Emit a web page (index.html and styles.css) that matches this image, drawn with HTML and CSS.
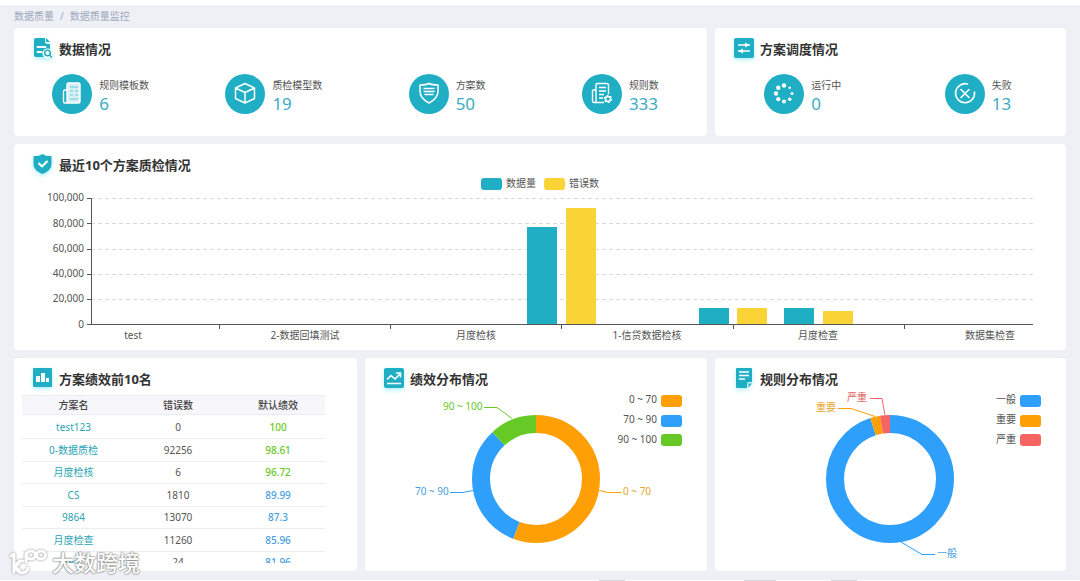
FILE: index.html
```html
<!DOCTYPE html>
<html lang="zh-CN">
  <head>
    <meta charset="UTF-8" />
    <meta name="viewport" content="width=device-width, initial-scale=1.0" />
    <title>数据质量监控</title>
    <link rel="stylesheet" href="styles.css">
  </head>
  <body>
    <nav class="breadcrumb">
      <a href="#">数据质量</a>
      <span>/</span>
      <a href="#">数据质量监控</a>
    </nav>

    <main class="dashboard">
      <!-- 数据情况 -->
      <section class="card card-double">
        <h2 class="card-title">
          <svg class="title-icon" viewBox="0 0 20 20">
            <path fill="#20aec5" d="M3 0h9v4a2 2 0 0 0 2 2h3v13H3a2 2 0 0 1-2-2V2a2 2 0 0 1 2-2z" />
            <path fill="#20aec5" d="M13 0l4 4h-3a1 1 0 0 1-1-1z" />
            <path stroke="#fff" stroke-width="1.800" stroke-linecap="round" d="M4.500 9h8M4.500 14h4" />
            <circle cx="14.500" cy="15.500" r="5" fill="#fff" />
            <circle cx="14.500" cy="15" r="2.800" fill="#fff" stroke="#20aec5" stroke-width="1.500" />
            <path stroke="#20aec5" stroke-width="1.600" stroke-linecap="round" d="M16.600 17.200l1.800 1.800" />
          </svg>
          数据情况
        </h2>
        <div class="stats">
          <div class="stat">
            <svg class="stat-icon" viewBox="0 0 40 40">
              <circle cx="20" cy="20" r="20" fill="#20aec5" />
              <rect x="15" y="9" width="13" height="20" rx="1.500" fill="#d5f0f5" stroke="#fff" stroke-width="1.400" />
              <path fill="none" stroke="#fff" stroke-width="1.400" d="M15 16h-2a1.500 1.500 0 0 0-1.500 1.500v10A1.500 1.500 0 0 0 13 29h3" />
              <path stroke="#20aec5" stroke-width=".6" d="M18 13h8M18 17h3M23 17h3M18 21h3M23 21h3M18 25h8" />
            </svg>
            <div class="stat-text">
              <div class="stat-label">规则模板数</div>
              <div class="stat-value">6</div>
            </div>
          </div>
          <div class="stat">
            <svg class="stat-icon" viewBox="0 0 40 40">
              <circle cx="20" cy="20" r="20" fill="#20aec5" />
              <path fill="none" stroke="#fff" stroke-width="1.500" stroke-linejoin="round" d="M20 9.500l9.500 4.500v10.500L20 29l-9.500-4.500V14zM10.500 14l9.500 4.500 9.500-4.500M20 18.500V29" />
            </svg>
            <div class="stat-text">
              <div class="stat-label">质检模型数</div>
              <div class="stat-value">19</div>
            </div>
          </div>
          <div class="stat">
            <svg class="stat-icon" viewBox="0 0 40 40">
              <circle cx="20" cy="20" r="20" fill="#20aec5" />
              <path fill="none" stroke="#fff" stroke-width="1.500" stroke-linejoin="round" d="M20 9.500c3 1.500 6 1.500 9 1.500v6c0 5.500-4 9.500-9 12-5-2.500-9-6.500-9-12v-6c3 0 6 0 9-1.500z" />
              <path stroke="#fff" stroke-width="1.500" d="M14.500 14.500h11M14.500 17.500h11M15.500 20.500h9" />
            </svg>
            <div class="stat-text">
              <div class="stat-label">方案数</div>
              <div class="stat-value">50</div>
            </div>
          </div>
          <div class="stat">
            <svg class="stat-icon" viewBox="0 0 40 40">
              <circle cx="20" cy="20" r="20" fill="#20aec5" />
              <path fill="none" stroke="#fff" stroke-width="1.400" stroke-linejoin="round" d="M26.500 20V11a1.500 1.500 0 0 0-1.500-1.500H15.500A1.500 1.500 0 0 0 14 11v17.500h8M14 16h-2.500a1 1 0 0 0-1 1v10a1.500 1.500 0 0 0 1.500 1.500h3" />
              <path stroke="#fff" stroke-width="1.400" d="M17 13.500h7M17 17h7M17 20.500h5M17 24h4" />
              <circle cx="26" cy="25" r="2.500" fill="none" stroke="#fff" stroke-width="1.500" />
              <circle cx="26" cy="25" r="3.600" fill="none" stroke="#fff" stroke-width="1.200" stroke-dasharray="1.900 1.870" />
            </svg>
            <div class="stat-text">
              <div class="stat-label">规则数</div>
              <div class="stat-value">333</div>
            </div>
          </div>
        </div>
      </section>

      <!-- 方案调度情况 -->
      <section class="card">
        <h2 class="card-title">
          <svg class="title-icon" viewBox="0 0 20 20">
            <rect width="20" height="20" rx="2" fill="#20aec5" />
            <path stroke="#fff" stroke-width="1.300" stroke-linecap="round" d="M4.500 7h11M4.500 13h11" />
            <path fill="#fff" d="M11 4.500L15.500 7 11 9.500zM9 10.500L4.500 13 9 15.500z" />
          </svg>
          方案调度情况
        </h2>
        <div class="stats">
          <div class="stat">
            <svg class="stat-icon" viewBox="0 0 40 40">
              <circle cx="20" cy="20" r="20" fill="#20aec5" />
              <g fill="#fff">
                <circle cx="20" cy="11.500" r="2.200" />
                <circle cx="14.300" cy="13.800" r="2.200" />
                <circle cx="12" cy="19.500" r="2.200" />
                <circle cx="14.300" cy="25.200" r="2.100" />
                <circle cx="20" cy="27.500" r="2" />
                <circle cx="25.700" cy="25.200" r="1.800" />
                <circle cx="28" cy="19.500" r="1.500" />
                <circle cx="25.700" cy="13.800" r="1.200" />
              </g>
            </svg>
            <div class="stat-text">
              <div class="stat-label">运行中</div>
              <div class="stat-value">0</div>
            </div>
          </div>
          <div class="stat">
            <svg class="stat-icon" viewBox="0 0 40 40">
              <circle cx="20" cy="20" r="20" fill="#20aec5" />
              <path fill="none" stroke="#fff" stroke-width="1.600" stroke-linecap="round" d="M22.500 10a9.500 9.500 0 1 0 7 8M16 15.500l8 8M24 15.500l-8 8" />
            </svg>
            <div class="stat-text">
              <div class="stat-label">失败</div>
              <div class="stat-value">13</div>
            </div>
          </div>
        </div>
      </section>

      <!-- 最近10个方案质检情况 -->
      <section class="card card-full">
        <h2 class="card-title">
          <svg class="title-icon" viewBox="0 0 20 20">
            <path fill="#20aec5" d="M9.500 0c3 2 6 2.200 9 2v8c0 5-4 8-9 10-5-2-9-5-9-10V2c3 .2 6 0 9-2z" />
            <path fill="none" stroke="#fff" stroke-width="2" stroke-linecap="round" stroke-linejoin="round" d="M6 9.500l3 3 5-5" />
          </svg>
          最近10个方案质检情况
        </h2>
        <svg class="chart" viewBox="0 0 1052 176">
          <rect x="467" y="4" width="21" height="12" rx="3" fill="#20aec5" />
          <text x="492" y="13">数据量</text>
          <rect x="530" y="4" width="21" height="12" rx="3" fill="#fad337" />
          <text x="555" y="13">错误数</text>

          <path class="grid-line" d="M77 24.500H1019M77 49.500H1019M77 75.500H1019M77 100.500H1019M77 125.500H1019" />

          <g fill="#20aec5">
            <rect x="513" y="53" width="30" height="98" />
            <rect x="685" y="134" width="30" height="17" />
            <rect x="770" y="134" width="30" height="17" />
          </g>
          <g fill="#fad337">
            <rect x="552" y="34" width="30" height="117" />
            <rect x="723" y="134" width="30" height="17" />
            <rect x="809" y="137" width="30" height="14" />
          </g>

          <path class="axis" d="M77.500 24V151M73 150.500H1019M73 24.500h4M73 49.500h4M73 75.500h4M73 100.500h4M73 125.500h4M205.500 151v4M376.500 151v4M547.500 151v4M719.500 151v4M890.500 151v4" />

          <g class="axis-y">
            <text x="70" y="27">100,000</text>
            <text x="70" y="53">80,000</text>
            <text x="70" y="78">60,000</text>
            <text x="70" y="103">40,000</text>
            <text x="70" y="128">20,000</text>
            <text x="70" y="154">0</text>
          </g>
          <g class="axis-x">
            <text x="119" y="165">test</text>
            <text x="291" y="165">2-数据回填测试</text>
            <text x="462" y="165">月度检核</text>
            <text x="633" y="165">1-信贷数据检核</text>
            <text x="804" y="165">月度检查</text>
            <text x="976" y="165">数据集检查</text>
          </g>
        </svg>
      </section>

      <!-- 方案绩效前10名 -->
      <section class="card">
        <h2 class="card-title">
          <svg class="title-icon" viewBox="0 0 20 20">
            <rect width="19" height="19" rx="1" fill="#20aec5" />
            <path fill="#fff" d="M3 8h4v6H3zM8 5h4v9H8zM13 10h3v4h-3z" />
          </svg>
          方案绩效前10名
        </h2>
        <div class="table-wrap">
          <table class="rank-table">
            <colgroup>
              <col class="col-name">
              <col class="col-errors">
              <col class="col-score">
            </colgroup>
            <thead>
              <tr><th>方案名</th><th>错误数</th><th>默认绩效</th></tr>
            </thead>
            <tbody>
              <tr><td><a href="#">test123</a></td><td>0</td><td class="score high">100</td></tr>
              <tr><td><a href="#">0-数据质检</a></td><td>92256</td><td class="score high">98.61</td></tr>
              <tr><td><a href="#">月度检核</a></td><td>6</td><td class="score high">96.72</td></tr>
              <tr><td><a href="#">CS</a></td><td>1810</td><td class="score">89.99</td></tr>
              <tr><td><a href="#">9864</a></td><td>13070</td><td class="score">87.3</td></tr>
              <tr><td><a href="#">月度检查</a></td><td>11260</td><td class="score">85.96</td></tr>
              <tr><td><a href="#">test</a></td><td>24</td><td class="score">81.96</td></tr>
            </tbody>
          </table>
        </div>
      </section>

      <!-- 绩效分布情况 -->
      <section class="card">
        <h2 class="card-title">
          <svg class="title-icon" viewBox="0 0 20 20">
            <rect width="20" height="20" rx="2" fill="#20aec5" />
            <path fill="none" stroke="#fff" stroke-width="1.600" d="M3 11.500l4-4 4 3.500 5-5M12 5h4.500v4.500M3 15.500h14" />
          </svg>
          绩效分布情况
        </h2>
        <svg class="chart" viewBox="0 0 342 183">
          <g class="ring" transform="rotate(-90 171 91)">
            <circle cx="171" cy="91" r="55" pathLength="360" stroke="#ff9f06" stroke-dasharray="201 159" />
            <circle cx="171" cy="91" r="55" pathLength="360" stroke="#2e9ffb" stroke-dasharray="116 244" stroke-dashoffset="-201" />
            <circle cx="171" cy="91" r="55" pathLength="360" stroke="#67c926" stroke-dasharray="43 317" stroke-dashoffset="-317" />
          </g>
          <g class="leader">
            <path stroke="#67c926" d="M119 19.500h13l15 11" />
            <path stroke="#2e9ffb" d="M85 104.500h13l10-2" />
            <path stroke="#ff9f06" d="M234 102.500l9 2h13" />
          </g>
          <text x="78" y="22" fill="#67c926">90 ~ 100</text>
          <text x="50" y="107" fill="#4a9fe0">70 ~ 90</text>
          <text x="258" y="107" fill="#e8a62e">0 ~ 70</text>
          <g class="legend">
            <text x="292" y="15">0 ~ 70</text>
            <text x="292" y="35">70 ~ 90</text>
            <text x="292" y="55">90 ~ 100</text>
          </g>
          <rect x="296" y="7" width="21" height="12" rx="3" fill="#ff9f06" />
          <rect x="296" y="27" width="21" height="12" rx="3" fill="#2e9ffb" />
          <rect x="296" y="46" width="21" height="12" rx="3" fill="#67c926" />
        </svg>
      </section>

      <!-- 规则分布情况 -->
      <section class="card">
        <h2 class="card-title">
          <svg class="title-icon" viewBox="0 0 20 20">
            <path fill="#20aec5" d="M3 0h14a1 1 0 0 1 1 1v13h-3a2 2 0 0 0-2 2v4H3a1 1 0 0 1-1-1V1a1 1 0 0 1 1-1z" />
            <path fill="#20aec5" d="M14.500 15.500H18L14.500 19.500z" />
            <path stroke="#fff" stroke-width="1.500" d="M5 4h10M5 7.500h10M5 11h6" />
          </svg>
          规则分布情况
        </h2>
        <svg class="chart" viewBox="0 0 351 183">
          <g class="ring" transform="rotate(-90 175 91)">
            <circle cx="175" cy="91" r="55" pathLength="360" stroke="#2e9ffb" stroke-dasharray="342 18" />
            <circle cx="175" cy="91" r="55" pathLength="360" stroke="#ff9f06" stroke-dasharray="9 351" stroke-dashoffset="-342" />
            <circle cx="175" cy="91" r="55" pathLength="360" stroke="#f56463" stroke-dasharray="9 351" stroke-dashoffset="-351" />
          </g>
          <g class="leader">
            <path stroke="#f56463" d="M155 10.500h12l3 17" />
            <path stroke="#ff9f06" d="M123 20.500h13l24 8" />
            <path stroke="#2e9ffb" d="M186 154l21 12.500h13" />
          </g>
          <text x="132" y="13" fill="#e06464">严重</text>
          <text x="101" y="23" fill="#e8a62e">重要</text>
          <text x="222" y="169" fill="#4a9fe0">一般</text>
          <g class="legend">
            <text x="301" y="15">一般</text>
            <text x="301" y="35">重要</text>
            <text x="301" y="55">严重</text>
          </g>
          <rect x="305" y="7" width="21" height="12" rx="3" fill="#2e9ffb" />
          <rect x="305" y="27" width="21" height="12" rx="3" fill="#ff9f06" />
          <rect x="305" y="46" width="21" height="12" rx="3" fill="#f56463" />
        </svg>
      </section>
    </main>

    <svg class="bottom-strip" viewBox="0 0 1080 4">
      <path fill="#d5d7de" d="M599 0h26v1h-26zM744 0h32v1h-32zM831 0h26v1h-26z" />
    </svg>

    <!-- 水印 -->
    <div class="watermark">
      <svg class="watermark-logo" viewBox="0 0 40 28">
        <g fill="none" stroke="#fff" stroke-width="3" stroke-linecap="round" stroke-linejoin="round">
          <path d="M3 8l3-2v18M11 15l-4 4 4 3M20 20a6 6 0 1 1-5-7" />
          <path d="M18 14V6" />
          <ellipse cx="23" cy="7" rx="4.500" ry="4" />
          <ellipse cx="33" cy="7" rx="4.500" ry="4" />
        </g>
      </svg>
      <span>大数跨境</span>
    </div>
  </body>
</html>
```
FILE: styles.css
```css
* {
  margin: 0;
  padding: 0;
  box-sizing: border-box;
}

body {
  position: relative;
  min-height: 100vh;
  overflow: hidden;
  border-top: 5px solid #fff;
  background: #eff0f5;
  font-family: "Noto Sans", "Noto Sans CJK SC", sans-serif;
  font-size: 10px;
  color: #555;
}

a {
  color: inherit;
  text-decoration: none;
}

.breadcrumb {
  display: flex;
  gap: 6px;
  padding: 0 14px;
  line-height: 23px;
  color: #9da9bd;
}

.dashboard {
  display: grid;
  grid-template-columns: 343fr 342fr 351fr;
  gap: 8px;
  padding: 0 14px;
}

.card {
  min-width: 0;
  padding-top: 10px;
  background: #fff;
  border-radius: 4px;
}

.card-double {
  grid-column: span 2;
}

.card-full {
  grid-column: 1 / -1;
}

.card-title {
  display: flex;
  align-items: center;
  gap: 6px;
  height: 20px;
  padding-left: 19px;
  font-size: 13px;
  font-weight: bold;
  color: #333;
}

.title-icon {
  width: 20px;
  height: 20px;
  overflow: visible;
  filter: drop-shadow(0 2px 2px rgba(60, 220, 240, 0.4));
}

/* 统计数字 */
.stats {
  display: flex;
  padding: 16px 0 22px;
}

.stat {
  flex: 1;
  display: flex;
  justify-content: center;
  align-items: center;
  gap: 7px;
}

.stat-icon {
  width: 40px;
  height: 40px;
}

.stat-label {
  line-height: 20px;
}

.stat-value {
  font-size: 17px;
  line-height: 18px;
  color: #3cacc5;
}

/* 图表 */
.chart {
  display: block;
  width: 100%;
}

.chart text {
  font-size: 10px;
}

.chart text:not([fill]) {
  fill: #555;
}

.grid-line {
  stroke: #d9d9d9;
  stroke-dasharray: 4 3;
}

.axis {
  fill: none;
  stroke: #555;
}

.axis-y text,
.legend text {
  text-anchor: end;
}

.axis-x text {
  text-anchor: middle;
}

.ring {
  fill: none;
  stroke-width: 18px;
}

.leader {
  fill: none;
}

/* 绩效排名表 */
.table-wrap {
  height: 168px;
  margin: 7px 32px 8px 8px;
  overflow: hidden;
}

.rank-table {
  width: 100%;
  table-layout: fixed;
  border-collapse: collapse;
  text-align: center;
  line-height: 16px;
}

.col-name {
  width: 34%;
}

.col-errors {
  width: 35%;
}

.col-score {
  width: 31%;
}

.rank-table th {
  height: 19px;
  background: #f6f6fb;
  border: solid #ebecf2;
  border-width: 1px 0;
  font-weight: 500;
  color: #444;
}

.rank-table tbody::before {
  content: "";
  display: block;
  height: 1px;
}

.rank-table td {
  height: 22px;
  border-bottom: 1px solid #ebeef3;
}

.rank-table tr:nth-child(even) td {
  height: 23px;
}

.rank-table a {
  color: #2ba5b5;
}

.rank-table .score {
  font-weight: 500;
  color: #4a9fe0;
}

.rank-table .high {
  color: #67c926;
}

.bottom-strip {
  display: block;
  width: 100%;
  margin-top: 9px;
  background: #fff;
}

.watermark {
  position: absolute;
  left: 8px;
  bottom: 8px;
  display: flex;
  align-items: center;
  gap: 4px;
  font-size: 22px;
  line-height: 28px;
  font-weight: 500;
  color: #fff;
  text-shadow: 0 0 2px #777, 0 0 2px #777;
}

.watermark-logo {
  width: 40px;
  height: 28px;
  filter: drop-shadow(0 0 1px #888);
}
```
